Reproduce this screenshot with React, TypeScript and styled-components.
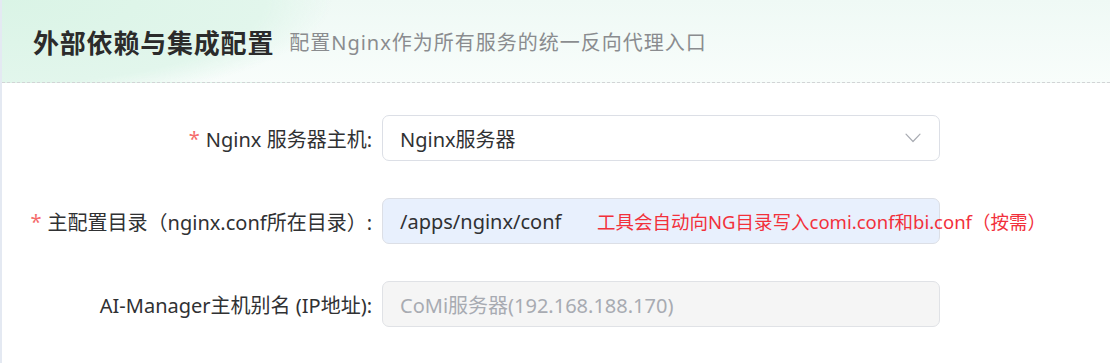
import React from 'react'
import styled, { createGlobalStyle } from 'styled-components'

const GlobalStyle = createGlobalStyle`
    html, body {
        margin: 0;
        padding: 0;
        background: #ffffff;
    }
    body {
        font-family: "Noto Sans", "Noto Sans CJK SC", sans-serif;
        color: #303133;
    }
`

const Card = styled.div`
    min-height: 363px;
    border-left: 2px solid #e4e9f2;
    background: #ffffff;
`

const Header = styled.div`
    height: 82px;
    display: flex;
    align-items: center;
    column-gap: 15px;
    padding-left: 31px;
    border-bottom: 1px dashed #d2d4d6;
    background:
        radial-gradient(ellipse 330px 105px at 0 0, #daf4e6 0%, #e2f6ec 80%, rgba(230, 247, 239, 0) 100%),
        linear-gradient(to bottom, #eff9f5 0%, #f8fdfb 100%);
`

const Title = styled.h1`
    margin: 0;
    font-family: "Noto Sans CJK SC", sans-serif;
    font-size: 26px;
    font-weight: 700;
    letter-spacing: 0.8px;
    color: #2b2b2b;
`

const Subtitle = styled.span`
    font-family: "Noto Sans", "Noto Sans CJK SC", sans-serif;
    font-size: 20px;
    letter-spacing: 1px;
    color: #8a8c8f;
`

const Form = styled.div`
    display: grid;
    grid-template-columns: 370px 558px;
    column-gap: 10px;
    row-gap: 37px;
    padding-top: 32px;
`

const Label = styled.label<{ $required?: boolean }>`
    display: flex;
    align-items: center;
    justify-content: flex-end;
    height: 46px;
    font-size: 20px;
    color: #303133;
    white-space: nowrap;

    &::before {
        content: ${props => (props.$required ? "'*'" : 'none')};
        color: #f56c6c;
        margin-right: 6px;
    }
`

type Variant = 'normal' | 'filled' | 'disabled'

const InputBox = styled.div<{ $variant: Variant }>`
    position: relative;
    height: 46px;
    box-sizing: border-box;
    display: flex;
    align-items: center;
    padding: 0 18px 0 17px;
    border: 1px solid ${props => (props.$variant === 'disabled' ? '#e0e2e6' : '#dcdfe6')};
    border-radius: 7px;
    background: ${props =>
        props.$variant === 'filled' ? '#e8f0fd' : props.$variant === 'disabled' ? '#f5f5f5' : '#ffffff'};
    color: ${props => (props.$variant === 'disabled' ? '#a8abb2' : '#303133')};
    font-size: 20px;
`

const Value = styled.span`
    flex: 1;
    white-space: nowrap;
`

const Hint = styled.span`
    position: absolute;
    left: 214px;
    top: 50%;
    transform: translateY(-50%);
    font-size: 18.5px;
    color: #f2303b;
    white-space: nowrap;
`

function Chevron() {
    return (
        <svg width="16" height="10" viewBox="0 0 16 10" fill="none">
            <path d="M1 1.2L8 8.5L15 1.2" stroke="#a8abb2" strokeWidth="1.2" strokeLinecap="round" strokeLinejoin="round" />
        </svg>
    )
}

function App() {
    return (
        <>
            <GlobalStyle />
            <Card>
                <Header>
                    <Title>外部依赖与集成配置</Title>
                    <Subtitle>配置Nginx作为所有服务的统一反向代理入口</Subtitle>
                </Header>
                <Form>
                    <Label $required>Nginx 服务器主机:</Label>
                    <InputBox $variant="normal">
                        <Value>Nginx服务器</Value>
                        <Chevron />
                    </InputBox>

                    <Label $required>主配置目录（nginx.conf所在目录）:</Label>
                    <InputBox $variant="filled">
                        <Value>/apps/nginx/conf</Value>
                        <Hint>工具会自动向NG目录写入comi.conf和bi.conf（按需）</Hint>
                    </InputBox>

                    <Label>AI-Manager主机别名 (IP地址):</Label>
                    <InputBox $variant="disabled">
                        <Value>CoMi服务器(192.168.188.170)</Value>
                    </InputBox>
                </Form>
            </Card>
        </>
    )
}

export default App
